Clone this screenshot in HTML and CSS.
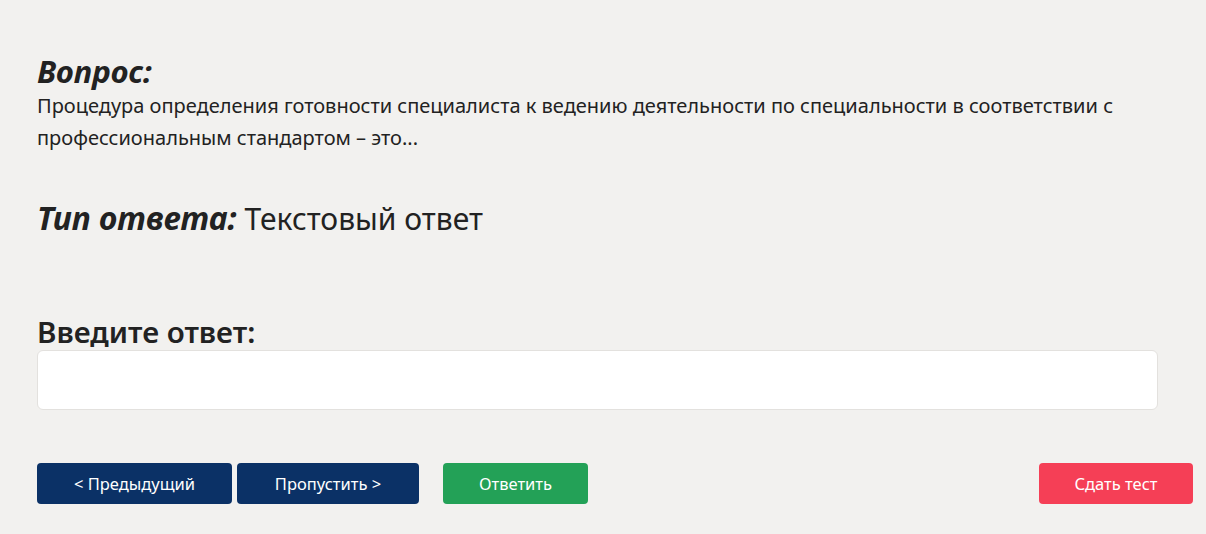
FILE: index.html
```
<!DOCTYPE html>
<html lang="ru">
  <head>
    <meta charset="UTF-8" />
    <meta name="viewport" content="width=device-width, initial-scale=1.0" />
    <title>Тест</title>
    <link rel="stylesheet" href="styles.css">
  </head>
  <body>
    <div class="test-wrapper">
      <div class="question">
        <h3>Вопрос:</h3>
        <p>Процедура определения готовности специалиста к ведению деятельности по специальности в соответствии с профессиональным стандартом – это...</p>
      </div>

      <div class="answer-type">
        <span class="label">Тип ответа:</span> Текстовый ответ
      </div>

      <div class="answer-area">
        <h4>Введите ответ:</h4>
        <input type="text" id="answer" />
      </div>

      <div class="buttons">
        <button class="btn btn-dark btn-prev">&lt; Предыдущий</button>
        <button class="btn btn-dark btn-skip">Пропустить &gt;</button>
        <button class="btn btn-green">Ответить</button>
        <button class="btn btn-red btn-finish">Сдать тест</button>
      </div>
    </div>
  </body>
</html>
```

FILE: styles.css
```
body {
  margin: 0;
  background: #f2f1ef;
  font-family: "Noto Sans", "Open Sans", sans-serif;
  color: #222;
}
.test-wrapper {
  padding: 50px 13px 0 37px;
}
.question h3 {
  margin: 0;
  font-size: 31px;
  font-style: italic;
  font-weight: 700;
  line-height: 42px;
}
.question p {
  margin: -2px 0 0;
  font-size: 20px;
  line-height: 32px;
  max-width: 1120px;
}
.answer-type {
  margin-top: 42px;
  font-size: 30px;
  line-height: 44px;
}
.answer-type .label {
  font-size: 32px;
  font-style: italic;
  font-weight: 700;
}
.answer-area {
  margin-top: 72px;
  margin-right: 35px;
}
.answer-area h4 {
  margin: 0;
  font-size: 29.5px;
  font-weight: 600;
  line-height: 38px;
}
.answer-area input {
  display: block;
  box-sizing: border-box;
  width: 100%;
  height: 60px;
  margin-top: -1px;
  border: 1px solid #e3e1de;
  border-radius: 6px;
  background: #fff;
}
.buttons {
  display: flex;
  gap: 5px;
  margin-top: 53px;
}
.btn {
  height: 41px;
  border: none;
  border-radius: 4px;
  color: #fff;
  font-family: inherit;
  font-size: 16.5px;
  cursor: pointer;
}
.btn-dark {
  background: #0b3166;
}
.btn-prev {
  width: 195px;
}
.btn-skip {
  width: 182px;
}
.btn-green {
  width: 145px;
  margin-left: 19px;
  background: #23a157;
}
.btn-red {
  background: #f53f56;
}
.btn-finish {
  width: 154px;
  margin-left: auto;
}
```
